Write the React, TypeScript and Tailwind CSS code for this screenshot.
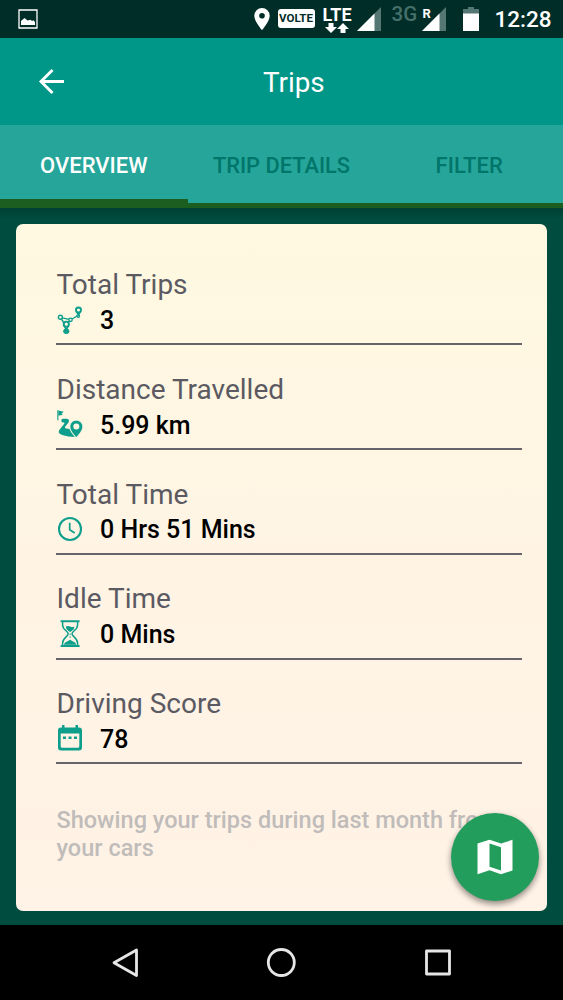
import React from 'react';

const TripsIcon = () => (
  <svg width="28" height="30" viewBox="0 0 28 30" fill="none" stroke="#0d9f8b" strokeWidth="1.4">
    <circle cx="4.4" cy="12.3" r="2" />
    <circle cx="14.5" cy="14.8" r="1.7" />
    <path d="M6.3 12.9l6.6 1.5M16 14l5.2-3M5.4 14l3.2 5M13.4 16.2L11.8 18" />
    <circle cx="22.5" cy="5" r="2.5" strokeWidth="1.9" />
    <path d="M20.7 6.8l1.8 3 1.8-3" strokeWidth="1.6" />
    <circle cx="22.2" cy="10.9" r="1.3" />
    <circle cx="10.3" cy="19.2" r="2.6" strokeWidth="1.9" />
    <path d="M8.4 21l1.9 4 1.9-4" strokeWidth="1.6" />
    <path d="M7.6 26.2a2.7 2.2 0 0 1 5.4 0 2.7 2.4 0 0 1-5.4 0z" fill="#0d9f8b" strokeWidth="1" />
  </svg>
);

const DistanceIcon = () => (
  <svg width="28" height="30" viewBox="0 0 28 30" fill="#0d9f8b">
    <path d="M1.3 1.2h1.1v10H1.3z" />
    <path d="M2.4 1.5l5.4 1.2-2.2 1.9 1.2 1.2-4.4 1z" />
    <path d="M5.6 10.2c1.800-.5 4.400-.4 6-.1 1.700.5 1.900 2.200.7 3.600l-3 3.700c-.8 1.200 0 2 1.400 2.200l2.800.5c1.300 3.200 3.200 5.800 5.500 7.900-4.800 0-9-.6-12.700-1.900-3.300-1.200-4.400-2.900-2.800-5.300l4.700-6c.6-.9.1-1.400-.9-1.300-1.400.1-2.400-1-1.700-3.300z" />
    <path
      d="M20.3 11.2a6.4 6.4 0 0 0-6.4 6.4c0 4 3.7 8 6.4 10.9 2.7-2.9 6.4-6.9 6.4-10.9a6.4 6.4 0 0 0-6.4-6.4z"
      stroke="#fff5e3"
      strokeWidth=".7"
    />
    <circle cx="20.3" cy="17.5" r="3" fill="#fff6e2" />
  </svg>
);

const TimeIcon = () => (
  <svg width="28" height="30" viewBox="0 0 28 30" fill="none" stroke="#0d9f8b">
    <circle cx="14" cy="15" r="11" strokeWidth="2.1" />
    <path d="M13.7 8.8v7l5 3.2" strokeWidth="1.7" />
  </svg>
);

const IdleIcon = () => (
  <svg width="28" height="30" viewBox="0 0 28 30" fill="#0d9f8b">
    <path d="M4.6 1.3h19v2h-19zM4.6 26h19v2h-19z" />
    <path
      d="M6.6 3v3c0 5 5.6 6 5.6 8.7S6.6 19 6.6 24v2M21.6 3v3c0 5-5.6 6-5.6 8.7s5.6 4.3 5.6 9.3v2"
      fill="none"
      stroke="#0d9f8b"
      strokeWidth="1.5"
    />
    <path d="M9.8 7.4q2.2-1 4.3 0t4.3 0q0 2.8-2.4 4.3l-1.9 1.4-1.9-1.4q-2.4-1.7-2.4-4.3zM7.8 25.8q.3-2.5 3.3-3.3l3-1.8 3 1.8q3 .8 3.3 3.3zM13.6 14.5h1v1.5h-1zM13.6 17.3h1v1.5h-1z" />
  </svg>
);

const ScoreIcon = () => (
  <svg width="28" height="30" viewBox="0 0 28 30" fill="#0d9f8b">
    <path
      fillRule="evenodd"
      d="M6 2h2.5v2.6h11V2H22v2.6h1q3 0 3 3v16.8q0 3-3 3H5q-3 0-3-3V7.6q0-3 3-3h1zM4.7 10.5v12.7q0 1.5 1.5 1.5h15.6q1.5 0 1.5-1.5V10.5z"
    />
    <path d="M7 13.5h3v2.6H7zM12.5 13.5h3v2.6h-3zM18 13.5h3v2.6h-3z" />
  </svg>
);

const Signal = () => (
  <svg width="24" height="24" viewBox="0 0 24 24">
    <path d="M24 0v24H0z" fill="#547773" />
    <path d="M17.5 6.5V24H0z" fill="#fff" />
  </svg>
);

const stats = [
  { label: 'Total Trips', value: '3', icon: <TripsIcon /> },
  { label: 'Distance Travelled', value: '5.99 km', icon: <DistanceIcon /> },
  { label: 'Total Time', value: '0 Hrs 51 Mins', icon: <TimeIcon /> },
  { label: 'Idle Time', value: '0 Mins', icon: <IdleIcon /> },
  { label: 'Driving Score', value: '78', icon: <ScoreIcon /> },
];

const StatusBar: React.FC = () => (
  <div className="flex h-[37.5px] shrink-0 items-start bg-[#012d28] text-white">
    <svg className="mt-[9px] ml-[18px]" width="20" height="20" viewBox="0 0 20 20">
      <path d="M1 1h18v18H1z" fill="none" stroke="#fff" strokeWidth="1.3" />
      <path d="M3 16v-4l3.5-3 3 2.5 3-.8L14 12l1.5-.8L17 13v3z" fill="#fff" />
    </svg>
    <svg className="mt-2 ml-[215.5px]" width="16" height="22" viewBox="0 0 16 22">
      <path
        fillRule="evenodd"
        d="M8 0a7.7 7.7 0 0 0-7.7 7.7C.3 13.5 8 22 8 22s7.7-8.5 7.7-14.3A7.7 7.7 0 0 0 8 0zm0 4.9a2.8 2.8 0 1 1 0 5.6 2.8 2.8 0 0 1 0-5.6z"
        fill="#fff"
      />
    </svg>
    <span className="mt-[9px] ml-2 flex h-[19px] w-[37px] items-center justify-center rounded-[3px] bg-white text-[11.5px] font-bold text-[#012d28]">
      VOLTE
    </span>
    <div className="mt-[6px] ml-[8.5px] flex w-[28px] flex-col items-center">
      <span className="text-[18px] leading-[17px] font-bold">LTE</span>
      <svg width="24" height="10" viewBox="0 0 24 10" fill="#fff">
        <path d="M3.5 0h5v4H12l-6 6-6-6h3.5zM15.5 10h5V6H24l-6-6-6 6h3.5z" />
      </svg>
    </div>
    <div className="mt-[7px] ml-[6px]">
      <Signal />
    </div>
    <span className="mt-[4px] ml-[10.5px] w-[25px] text-[20.5px] leading-[20px] font-medium text-[#46706a]">3G</span>
    <div className="relative mt-[7px] ml-[5px]">
      <Signal />
      <span className="absolute top-0 left-[1px] text-[13px] leading-[13px] font-bold">R</span>
    </div>
    <svg className="mt-[7px] ml-[17px]" width="16" height="24" viewBox="0 0 16 24">
      <path d="M5 0h6v2h5v6H0V2h5z" fill="#547773" />
      <path d="M0 6.5h16V24H0z" fill="#fff" />
    </svg>
    <span className="mt-[5px] ml-4 text-[22.5px] leading-[28px] font-medium">12:28</span>
  </div>
);

const NavigationBar: React.FC = () => (
  <div className="flex h-[75px] shrink-0 items-center justify-between bg-black pr-[109.5px] pl-[108.5px]">
    <svg width="32" height="32" viewBox="0 0 32 32" fill="none" stroke="#e6e6e6" strokeWidth="2.8" strokeLinejoin="round">
      <path d="M27.5 3v25.5L5 15.7z" />
    </svg>
    <svg width="32" height="32" viewBox="0 0 32 32" fill="none" stroke="#e6e6e6" strokeWidth="2.8">
      <circle cx="16.3" cy="15.5" r="13" />
    </svg>
    <svg width="32" height="32" viewBox="0 0 32 32" fill="none" stroke="#e6e6e6" strokeWidth="2.8" strokeLinejoin="round">
      <path d="M4.5 4h23v23h-23z" />
    </svg>
  </div>
);

export default function App() {
  return (
    <div className="flex h-[1000px] w-[563px] flex-col overflow-hidden bg-[#004d40] font-['Roboto',sans-serif]">
      <StatusBar />

      <header className="flex h-[87.5px] shrink-0 items-center bg-[#009688]">
        <svg className="ml-[38px]" width="27" height="27" viewBox="0 0 27 27" fill="none" stroke="#fff" strokeWidth="2.9">
          <path d="M26 13.5H3M14.5 2L3 13.5 14.5 25" />
        </svg>
        <h1 className="ml-[198px] pt-[3px] text-[27.8px] text-white">Trips</h1>
      </header>

      <nav className="grid h-[83px] shrink-0 grid-cols-3 bg-[#26a69a] text-center text-[22px] leading-[81px] font-medium text-[#00756a]">
        <div className="h-[83px] border-b-[9px] border-[#1b5e20] text-white">OVERVIEW</div>
        <div className="h-[83px] border-b-[5px] border-[#1b5e20] text-[21.8px]">TRIP DETAILS</div>
        <div className="h-[83px] border-b-[5px] border-[#1b5e20]">FILTER</div>
      </nav>

      <main className="relative flex-1 bg-linear-to-b from-[#003f34] to-[#004d40] to-[12px] pt-[15.5px] pr-4 pb-[14px] pl-[15.5px]">
        <section className="h-full rounded-[7px] bg-linear-to-b from-[#fff9e1] via-[#fff4e4] via-50% to-[#fff2e6] pt-[17.3px] pr-[25px] pl-[40.5px]">
          {stats.map((s) => (
            <div key={s.label} className="flex h-[104.7px] flex-col justify-end border-b-2 border-[#66646a] pb-[5.3px]">
              <div className="pb-px pl-[0.5px] text-[28px] leading-[35px] text-[#5b5a62]">{s.label}</div>
              <div className="flex h-[35px] items-center">
                <div className="pb-[2px]">{s.icon}</div>
                <span className="ml-4 text-[25px] font-medium text-black">{s.value}</span>
              </div>
            </div>
          ))}
          <p className="mt-[42px] w-[450px] pl-[0.5px] text-[23.5px] leading-[28px] font-medium text-[#bfbcba]">
            Showing your trips during last month from your cars
          </p>
        </section>

        <button className="absolute right-[24px] bottom-[24.5px] flex h-[88px] w-[88px] items-center justify-center rounded-full bg-[#239d5c] shadow-[0_3px_6px_rgba(0,0,0,0.45)]">
          <svg width="36" height="36" viewBox="0 0 36 36">
            <path
              fillRule="evenodd"
              d="M.5 4.5L12.5.8l11.5 3.8L35.5.8v30.7L24 35.3l-11.5-4L.5 35.3zM12.5 4.5v23.3l11.5 3.7V8.3z"
              fill="#fff"
            />
          </svg>
        </button>
      </main>

      <NavigationBar />
    </div>
  );
}
